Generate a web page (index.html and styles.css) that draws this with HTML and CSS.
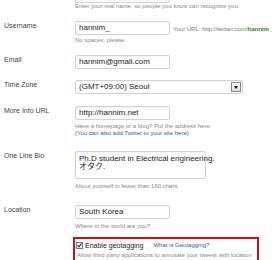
FILE: index.html
```
<!DOCTYPE html>
<html lang="en">
<head>
  <meta charset="UTF-8">
  <meta name="viewport" content="width=device-width, initial-scale=1.0">
  <title>Account Settings</title>
  <link rel="stylesheet" href="styles.css">
</head>
<body>
  <div class="settings">
    <div class="row first">
      <div class="label"></div>
      <div class="field">
        <div class="box cut"></div>
        <p class="help">Enter your real name, so people you know can recognize you.</p>
      </div>
    </div>

    <div class="row username">
      <label class="label">Username</label>
      <div class="field">
        <div class="inline">
          <div class="box short">hannim_</div>
          <span class="yoururl">Your URL: http://twitter.com/<b>hannim_</b></span>
        </div>
        <p class="help">No spaces, please.</p>
      </div>
    </div>

    <div class="row email">
      <label class="label">Email</label>
      <div class="field">
        <div class="box short">hannim@gmail.com</div>
      </div>
    </div>

    <div class="row timezone">
      <label class="label">Time Zone</label>
      <div class="field">
        <div class="box select">
          <span>(GMT+09:00) Seoul</span>
          <span class="arrow"></span>
        </div>
      </div>
    </div>

    <div class="row moreinfo">
      <label class="label">More Info URL</label>
      <div class="field">
        <div class="box short">http://hannim.net</div>
        <p class="help spaced">Have a homepage or a blog? Put the address here.</p>
        <p class="help"><a href="#">(You can also add Twitter to your site here)</a></p>
      </div>
    </div>

    <div class="row bio">
      <label class="label">One Line Bio</label>
      <div class="field">
        <div class="box textarea">Ph.D student in Electrical engineering.<br>オタク.</div>
        <p class="help spaced">About yourself in fewer than 160 chars.</p>
      </div>
    </div>

    <div class="row location">
      <label class="label">Location</label>
      <div class="field">
        <div class="box short">South Korea</div>
        <p class="help spaced">Where in the world are you?</p>
      </div>
    </div>

    <div class="row geo">
      <div class="label"></div>
      <div class="field">
        <div class="geobox">
          <div class="geoline">
            <span class="check">
              <svg width="7" height="7" viewBox="0 0 7 7">
                <rect x="0.5" y="0.5" width="6" height="6" fill="#eef2fa" stroke="#5a7bb0"/>
                <path d="M1.6 3.4 L2.9 4.8 L5.4 1.7" fill="none" stroke="#1b2f5e" stroke-width="1.1"/>
              </svg>
            </span>
            <span class="geolabel">Enable geotagging</span>
            <a href="#" class="whatis">What is Geotagging?</a>
          </div>
          <p class="help">Allow third party applications to annotate your tweets with location</p>
        </div>
      </div>
    </div>
  </div>
</body>
</html>
```

FILE: styles.css
```
body {
  margin: 0;
  background: #fff;
  font-family: "Liberation Sans", Arial, sans-serif;
  color: #333;
  overflow: hidden;
}

.settings {
  height: 260px;
  overflow: hidden;
}

.row {
  display: grid;
  grid-template-columns: 75px 1fr;
}

.label {
  padding: 1px 0 0 4px;
  font-size: 7px;
  line-height: 8px;
  color: #444;
}

.field {
  min-width: 0;
}

.help {
  margin: 0;
  font-size: 6px;
  line-height: 7px;
  color: #888;
  white-space: nowrap;
}

.help a {
  color: #2266aa;
  text-decoration: none;
}

.box {
  box-sizing: border-box;
  height: 14px;
  border: 1px solid #d2d2d2;
  border-radius: 2px;
  background: #fff;
  box-shadow: inset 0 1px 1px rgba(0, 0, 0, 0.04);
  padding: 0 3px;
  font-size: 8px;
  line-height: 12px;
  color: #222;
  white-space: nowrap;
}

.short {
  width: 95px;
}

.cut {
  width: 95px;
  height: 3px;
  border-top: none;
  border-radius: 0 0 2px 2px;
}

.username { margin-top: 11px; }
.email { margin-top: 11px; }
.timezone { margin-top: 11px; }
.moreinfo { margin-top: 12px; }
.bio { margin-top: 14px; }
.location { margin-top: 15px; }
.geo { margin-top: 7px; }

.username .help {
  margin-top: 2px;
}

.help.spaced {
  margin-top: 3px;
}

.bio .help.spaced,
.location .help.spaced {
  margin-top: 4px;
}

.inline {
  display: flex;
  align-items: center;
  gap: 3px;
}

.yoururl {
  font-size: 6px;
  color: #777;
  white-space: nowrap;
  padding-top: 1px;
}

.yoururl b {
  color: #2a8a10;
}

.select {
  width: 168px;
  display: flex;
  justify-content: space-between;
  align-items: center;
  padding-right: 1px;
}

.arrow {
  position: relative;
  width: 8px;
  height: 8px;
  border: 1px solid #8a8a8a;
  background: linear-gradient(#fafafa, #dcdcdc);
}

.arrow::after {
  content: "";
  position: absolute;
  left: 2px;
  top: 3px;
  border-left: 2px solid transparent;
  border-right: 2px solid transparent;
  border-top: 3px solid #111;
}

.textarea {
  width: 131px;
  height: 28px;
  padding-top: 3px;
  line-height: 8px;
  font-family: "Liberation Sans", "Noto Sans CJK JP", Arial, sans-serif;
}

.geobox {
  box-sizing: border-box;
  margin-left: -2px;
  width: 186px;
  height: 30px;
  border: 2px solid #cc1111;
  border-bottom: none;
  padding: 1px 0 0 1px;
}

.geoline {
  display: flex;
  align-items: center;
  height: 10px;
}

.check {
  display: flex;
  margin-right: 2px;
}

.geolabel {
  font-size: 7px;
  color: #222;
}

.whatis {
  margin-left: 10px;
  font-size: 6px;
  color: #2266aa;
  text-decoration: none;
}

.geobox .help {
  margin-top: 2px;
  padding-left: 1px;
}
```
